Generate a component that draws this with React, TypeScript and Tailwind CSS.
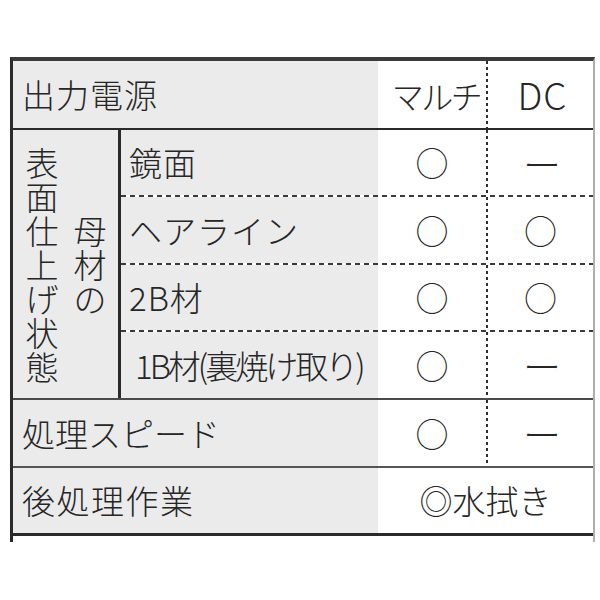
import React from "react";

const subRows = [
  { label: "鏡面", m: "○", d: "ー", tight: false, h: "h-[65px]" },
  { label: "ヘアライン", m: "○", d: "○", tight: false, h: "h-[66px]" },
  { label: "2B材", m: "○", d: "○", tight: false, h: "h-[65px]" },
  { label: "1B材(裏焼け取り)", m: "○", d: "ー", tight: true, h: "h-[66px]" },
];

function VSep() {
  return (
    <div className="w-[2px] self-stretch [background-image:repeating-linear-gradient(180deg,#2e2e2e_0_3px,transparent_3px_6px)]" />
  );
}

function HDash() {
  return (
    <div className="h-[2px] w-full [background-image:repeating-linear-gradient(90deg,#3a3a3a_0_5px,transparent_5px_9px)]" />
  );
}

function Mark({ v }: { v: string }) {
  return v === "ー" ? (
    <span className="pl-[3px] text-[38px] leading-none">ー</span>
  ) : (
    <span>{v}</span>
  );
}

export default function App() {
  return (
    <div className="min-h-[600px] w-[600px] bg-white pt-[57px] pl-[10px] font-light text-[#262626] [font-family:'Noto_Sans_CJK_JP','Noto_Sans',sans-serif]">
      <div className="w-[585px] border-t-[4px] border-l-[3px] border-r-2 border-t-[#3a3a3a] border-l-[#2a2a2a] border-r-[#aeaeae]">
        {/* header */}
        <div className="flex h-[67px] text-[33px] leading-none">
          <div className="flex w-[365px] items-center bg-[#ebebec] pl-[9px] tracking-[1px]">出力電源</div>
          <div className="flex w-[108px] items-center justify-center pl-[8px] text-[32px] tracking-[-2.5px]">マルチ</div>
          <VSep />
          <div className="flex w-[105px] items-center justify-center pl-[4px] text-[37px] tracking-[1px]">DC</div>
        </div>
        <div className="h-[2px] bg-[#2a2a2a]" />

        {/* surface finish block */}
        <div className="flex h-[268px]">
          <div className="flex w-[105px] items-center gap-[14px] bg-[#ebebec] pl-[12px] text-[33px]">
            <div className="w-[34px] break-all text-center leading-[34px]">表面仕上げ状態</div>
            <div className="w-[34px] break-all text-center leading-[34px]">母材の</div>
          </div>
          <div className="w-[3px] bg-[#2a2a2a]" />
          <div className="flex flex-1 flex-col">
            {subRows.map((r, i) => (
              <React.Fragment key={r.label}>
                {i > 0 && <HDash />}
                <div className={`flex ${r.h} text-[33px] leading-none`}>
                  <div
                    className={
                      r.tight
                        ? "flex w-[257px] items-center bg-[#ebebec] pl-[14px] tracking-[-3px]"
                        : "flex w-[257px] items-center bg-[#ebebec] pl-[8px] tracking-[1px]"
                    }
                  >
                    {r.label}
                  </div>
                  <div className="flex w-[108px] items-center justify-center">
                    <Mark v={r.m} />
                  </div>
                  <VSep />
                  <div className="flex w-[105px] items-center justify-center">
                    <Mark v={r.d} />
                  </div>
                </div>
              </React.Fragment>
            ))}
          </div>
        </div>
        <div className="h-[2px] bg-[#4a4a4a]" />

        {/* speed */}
        <div className="flex h-[66px] text-[33px] leading-none">
          <div className="flex w-[365px] items-center bg-[#ebebec] pl-[9px]">処理スピード</div>
          <div className="flex w-[108px] items-center justify-center">○</div>
          <VSep />
          <div className="flex w-[105px] items-center justify-center">
            <Mark v="ー" />
          </div>
        </div>
        <div className="h-[2px] bg-[#555]" />

        {/* post processing */}
        <div className="flex h-[65px] text-[33px] leading-none">
          <div className="flex w-[365px] items-center bg-[#ebebec] pl-[9px] tracking-[1.5px]">後処理作業</div>
          <div className="flex flex-1 items-center justify-center">◎水拭き</div>
        </div>
        <div className="h-[3px] bg-[#2a2a2a]" />
        <div className="h-[6px]" />
      </div>
    </div>
  );
}
